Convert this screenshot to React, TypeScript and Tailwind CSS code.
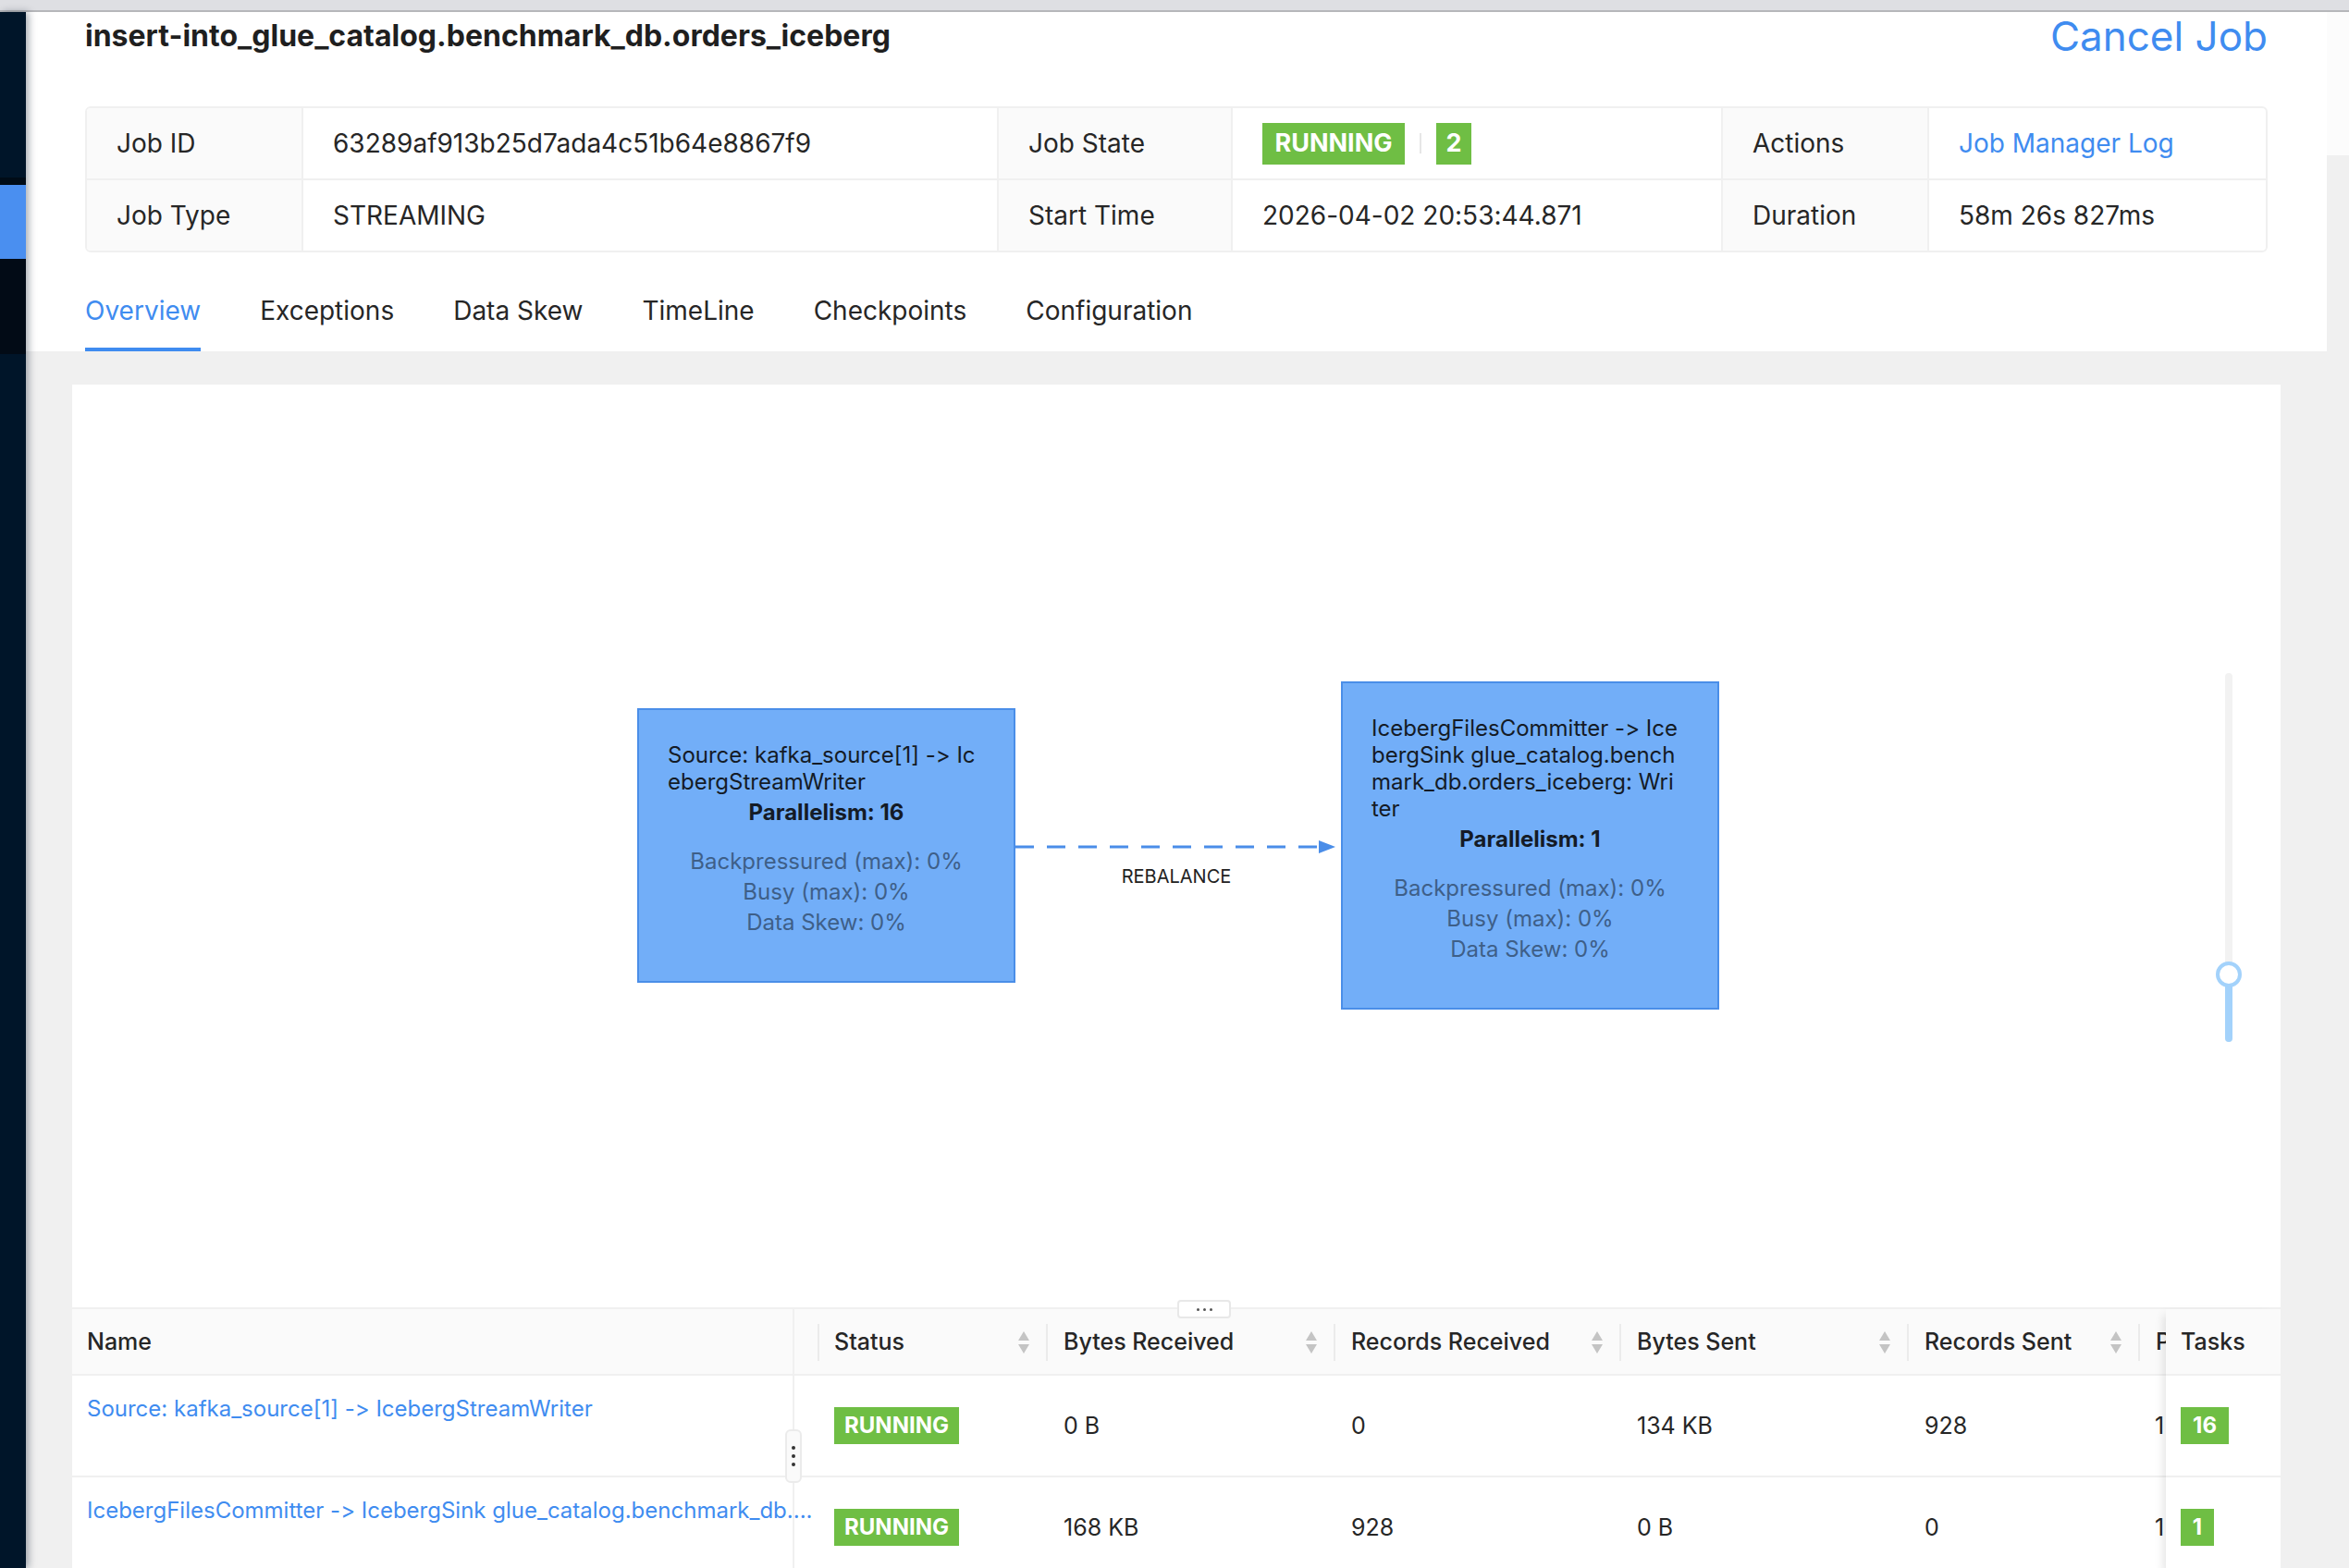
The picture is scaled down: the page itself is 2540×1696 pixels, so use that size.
import React from "react";

const Sidebar = () => (
  <div className="w-[28px] shrink-0 flex flex-col relative z-10 shadow-[3px_0_8px_rgba(0,21,41,0.35)]">
    <div className="h-[179px] bg-[#001529]" />
    <div className="h-[8px] bg-[#000c17]" />
    <div className="h-[80px] bg-[#4a8ff0]" />
    <div className="h-[103px] bg-[#020b16]" />
    <div className="flex-1 bg-[#001529]" />
  </div>
);

const Tag = ({ text, className }: { text: string; className: string }) => (
  <span
    className={
      "inline-flex items-center justify-center bg-[#6fbe44] text-white font-bold " +
      className
    }
  >
    {text}
  </span>
);

const Descriptions = () => (
  <div className="border-2 border-[#f0f0f0] rounded-md overflow-hidden text-[28px] leading-[44px]">
    <div className="grid grid-cols-[232px_752px_253px_530px_223px_365px] h-[76px]">
      <div className="bg-[#fafafa] px-8 flex items-center">Job ID</div>
      <div className="border-l-2 border-[#f0f0f0] px-8 flex items-center">
        63289af913b25d7ada4c51b64e8867f9
      </div>
      <div className="bg-[#fafafa] border-l-2 border-[#f0f0f0] px-8 flex items-center">
        Job State
      </div>
      <div className="border-l-2 border-[#f0f0f0] px-8 flex items-center">
        <Tag text="RUNNING" className="w-[154px] h-[45px] text-[27px]" />
        <span className="w-[2px] h-[22px] bg-[#e6e6e6] mx-[16px]" />
        <Tag text="2" className="w-[38px] h-[45px] text-[27px]" />
      </div>
      <div className="bg-[#fafafa] border-l-2 border-[#f0f0f0] px-8 flex items-center">
        Actions
      </div>
      <div className="border-l-2 border-[#f0f0f0] px-8 flex items-center text-[#3f8cf0]">
        Job Manager Log
      </div>
    </div>
    <div className="grid grid-cols-[232px_752px_253px_530px_223px_365px] h-[78px] border-t-2 border-[#f0f0f0]">
      <div className="bg-[#fafafa] px-8 flex items-center">Job Type</div>
      <div className="border-l-2 border-[#f0f0f0] px-8 flex items-center">STREAMING</div>
      <div className="bg-[#fafafa] border-l-2 border-[#f0f0f0] px-8 flex items-center">
        Start Time
      </div>
      <div className="border-l-2 border-[#f0f0f0] px-8 flex items-center">
        2026-04-02 20:53:44.871
      </div>
      <div className="bg-[#fafafa] border-l-2 border-[#f0f0f0] px-8 flex items-center">
        Duration
      </div>
      <div className="border-l-2 border-[#f0f0f0] px-8 flex items-center">58m 26s 827ms</div>
    </div>
  </div>
);

const tabs = ["Overview", "Exceptions", "Data Skew", "TimeLine", "Checkpoints", "Configuration"];

const Header = () => (
  <div className="flex-1 bg-white px-[64px] flex flex-col">
    <div className="h-[52px] flex items-center justify-between">
      <h1 className="text-[32px] font-bold text-[#1f1f1f] leading-[40px]">
        insert-into_glue_catalog.benchmark_db.orders_iceberg
      </h1>
      <span className="text-[44px] leading-[52px] text-[#3f8cf0]">Cancel Job</span>
    </div>
    <div className="mt-[50px]">
      <Descriptions />
    </div>
    <div className="mt-[16px] h-[91px] flex items-end gap-[64px] text-[28px] leading-[44px]">
      {tabs.map((t, i) => (
        <div key={t} className="relative pb-[22px]">
          <span className={i === 0 ? "text-[#3f8cf0]" : "text-[#262626]"}>{t}</span>
          {i === 0 && <div className="absolute left-0 right-0 bottom-0 h-[4px] bg-[#3f8cf0]" />}
        </div>
      ))}
    </div>
  </div>
);

const GraphNode = ({
  left,
  top,
  height,
  lines,
  parallelism,
}: {
  left: string;
  top: string;
  height: string;
  lines: string[];
  parallelism: number;
}) => (
  <div
    className={
      "absolute w-[409px] border-2 border-[#4a8ee8] bg-[#72aef8] pt-[34px] px-[31px] text-[24px] " +
      left +
      " " +
      top +
      " " +
      height
    }
  >
    {lines.map((l) => (
      <div key={l} className="leading-[29px] whitespace-nowrap text-[#141b26]">
        {l}
      </div>
    ))}
    <div className="mt-[4px] leading-[29px] text-center font-bold text-[#141b26]">
      Parallelism: {parallelism}
    </div>
    <div className="mt-[22px] leading-[33px] text-center text-[#3e5f88]">
      <div>Backpressured (max): 0%</div>
      <div>Busy (max): 0%</div>
      <div>Data Skew: 0%</div>
    </div>
  </div>
);

const SortIcon = () => (
  <svg
    width="16"
    height="26"
    viewBox="0 0 16 26"
    className="absolute right-[18px] top-[23px]"
  >
    <polygon points="8,1 14,11 2,11" fill="#c4c4c4" />
    <polygon points="2,15 14,15 8,25" fill="#c4c4c4" />
  </svg>
);

const cols = [
  { title: "Name", w: "w-[808px]", sort: false },
  { title: "Status", w: "w-[247px]", sort: true },
  { title: "Bytes Received", w: "w-[311px]", sort: true },
  { title: "Records Received", w: "w-[309px]", sort: true },
  { title: "Bytes Sent", w: "w-[311px]", sort: true },
  { title: "Records Sent", w: "w-[250px]", sort: true },
  { title: "Parallelism", w: "w-[200px]", sort: false },
];

const rows = [
  {
    name: "Source: kafka_source[1] -> IcebergStreamWriter",
    vals: ["0 B", "0", "134 KB", "928", "16"],
    tasks: "16",
    tw: "w-[52px]",
  },
  {
    name: "IcebergFilesCommitter -> IcebergSink glue_catalog.benchmark_db....",
    vals: ["168 KB", "928", "0 B", "0", "1"],
    tasks: "1",
    tw: "w-[36px]",
  },
];

const Table = () => (
  <div className="flex border-t-2 border-[#f0f0f0] text-[25px] leading-[36px]">
    <div className="flex-1 min-w-0 overflow-hidden relative">
      <div className="flex h-[72px] bg-[#fafafa] border-b-2 border-[#f0f0f0] font-medium">
        {cols.map((c, i) => (
          <div
            key={c.title}
            className={
              "relative shrink-0 flex items-center whitespace-nowrap " +
              c.w +
              (i === 0 ? " pl-[16px]" : i === 1 ? " pl-[16px]" : " pl-[17px]")
            }
          >
            {c.title}
            {c.sort && <SortIcon />}
            {i < 6 && (
              <div className="absolute right-0 top-[16px] h-[40px] w-[2px] bg-[#ebebeb]" />
            )}
          </div>
        ))}
      </div>
      {rows.map((r) => (
        <div key={r.name} className="flex h-[110px] border-b-2 border-[#f0f0f0]">
          <div className="w-[808px] shrink-0 pl-[16px] pr-[8px] pt-[18px] whitespace-nowrap text-[24px] text-[#3f8cf0]">
            {r.name}
          </div>
          <div className="w-[247px] shrink-0 pl-[16px] flex items-center">
            <Tag text="RUNNING" className="w-[135px] h-[40px] text-[24px]" />
          </div>
          <div className="w-[311px] shrink-0 pl-[17px] flex items-center">{r.vals[0]}</div>
          <div className="w-[309px] shrink-0 pl-[17px] flex items-center">{r.vals[1]}</div>
          <div className="w-[311px] shrink-0 pl-[17px] flex items-center">{r.vals[2]}</div>
          <div className="w-[250px] shrink-0 pl-[17px] flex items-center">{r.vals[3]}</div>
          <div className="w-[200px] shrink-0 pl-[16px] flex items-center">1</div>
        </div>
      ))}
      <div className="absolute left-[779px] top-0 bottom-0 w-[2px] bg-[#f0f0f0]" />
      <div className="absolute left-[771px] top-[130px] w-[18px] h-[58px] rounded-md border-2 border-[#ebebeb] bg-[#fafafa] flex flex-col items-center justify-center gap-[5px]">
        <span className="w-[4px] h-[4px] rounded-full bg-[#333]" />
        <span className="w-[4px] h-[4px] rounded-full bg-[#333]" />
        <span className="w-[4px] h-[4px] rounded-full bg-[#333]" />
      </div>
    </div>
    <div className="w-[124px] shrink-0 bg-white relative shadow-[-8px_0_10px_-6px_rgba(0,0,0,0.12)]">
      <div className="h-[72px] bg-[#fafafa] border-b-2 border-[#f0f0f0] pl-[16px] flex items-center font-medium">
        Tasks
      </div>
      {rows.map((r) => (
        <div key={r.name} className="h-[110px] border-b-2 border-[#f0f0f0] pl-[16px] flex items-center">
          <Tag text={r.tasks} className={r.tw + " h-[40px] text-[24px]"} />
        </div>
      ))}
    </div>
  </div>
);

const GraphCard = () => (
  <div className="ml-[50px] mr-[74px] mt-[36px] flex-1 bg-white flex flex-col min-h-0">
    <div className="relative h-[998px] shrink-0">
      <GraphNode
        left="left-[611px]"
        top="top-[350px]"
        height="h-[297px]"
        lines={["Source: kafka_source[1] -> Ic", "ebergStreamWriter"]}
        parallelism={16}
      />
      <GraphNode
        left="left-[1372px]"
        top="top-[321px]"
        height="h-[355px]"
        lines={[
          "IcebergFilesCommitter -> Ice",
          "bergSink glue_catalog.bench",
          "mark_db.orders_iceberg: Wri",
          "ter",
        ]}
        parallelism={1}
      />
      <svg width="360" height="20" className="absolute left-[1020px] top-[490px]">
        <line x1="0" y1="10" x2="330" y2="10" stroke="#4a8de8" strokeWidth="3" strokeDasharray="20 14" />
        <polygon points="328,3 346,10 328,17" fill="#4a8de8" />
      </svg>
      <div className="absolute left-[1194px] top-[532px] -translate-x-1/2 -translate-y-1/2 text-[20px] text-[#222] whitespace-nowrap">
        REBALANCE
      </div>
      <div className="absolute left-[2318px] top-[312px] w-[28px] h-[399px]">
        <div className="absolute left-[10px] w-[8px] top-0 bottom-0 rounded-full bg-[#f2f2f2]" />
        <div className="absolute left-[10px] w-[8px] top-[326px] bottom-0 rounded-full bg-[#a3d2fb]" />
        <div className="absolute left-0 top-[312px] w-[28px] h-[28px] rounded-full border-4 border-[#a3d2fb] bg-white" />
      </div>
      <div className="absolute left-[1195px] top-[990px] z-10 w-[58px] h-[20px] rounded-[4px] border-2 border-[#e8e8e8] bg-white flex items-center justify-center gap-[4px]">
        <span className="w-[3px] h-[3px] rounded-full bg-[#555]" />
        <span className="w-[3px] h-[3px] rounded-full bg-[#555]" />
        <span className="w-[3px] h-[3px] rounded-full bg-[#555]" />
      </div>
    </div>
    <Table />
  </div>
);

export default function App() {
  return (
    <div className="w-[2540px] h-[1696px] overflow-hidden flex flex-col bg-[#f0f0f0] font-['Inter',sans-serif] [font-variant-ligatures:none] [font-feature-settings:'calt'_0,'liga'_0] text-[#262626]">
      <div className="h-[13px] shrink-0 bg-[#dedfe3] border-b-2 border-[#b6b7ba]" />
      <div className="flex flex-1 min-h-0">
        <Sidebar />
        <div className="flex-1 flex flex-col min-w-0">
          <div className="flex shrink-0">
            <Header />
            <div className="w-[24px] shrink-0">
              <div className="h-[155px] bg-[#fcfcfc]" />
            </div>
          </div>
          <GraphCard />
        </div>
      </div>
    </div>
  );
}
